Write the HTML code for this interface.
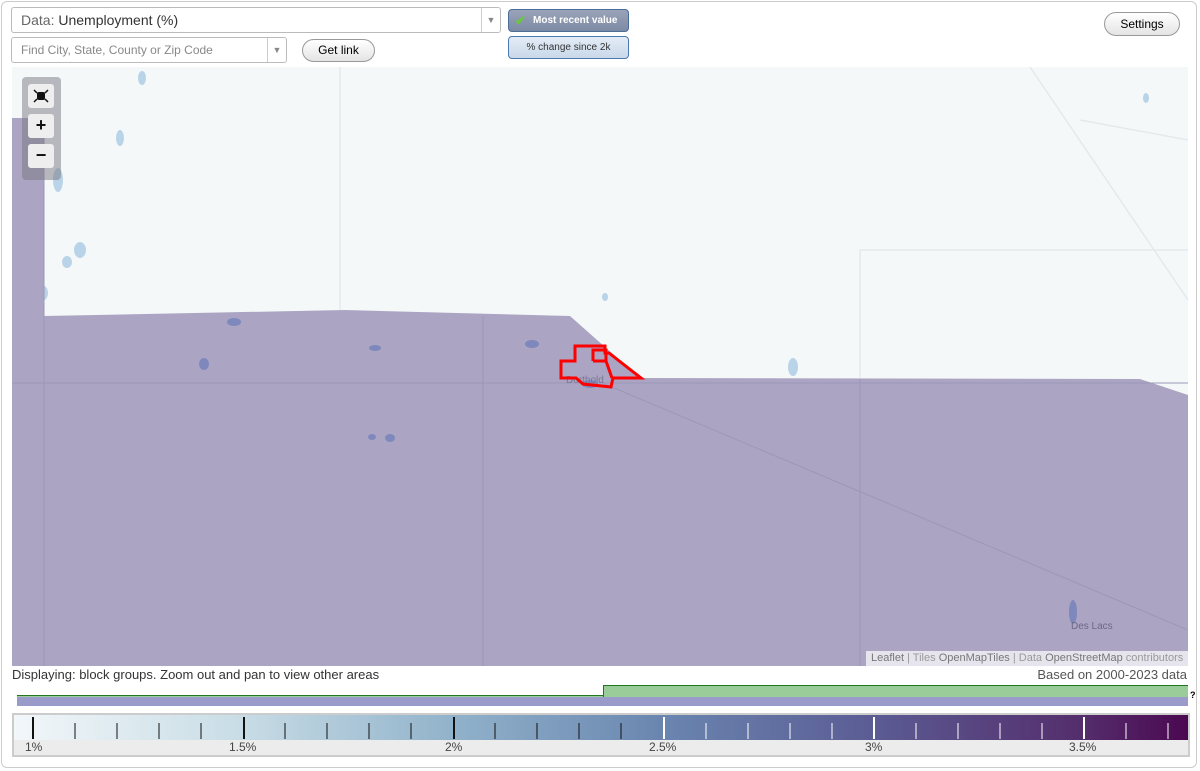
<!DOCTYPE html><html><head><style>
body{margin:0;width:1200px;height:771px;background:#fff;font-family:"Liberation Sans",sans-serif;position:relative;overflow:hidden}
.a{position:absolute}
.frame{left:1px;top:1px;width:1196px;height:767px;border:1px solid #ccc;border-radius:6px;box-sizing:border-box}
.sel{background:#fff;border:1px solid #bbb;border-radius:3px;box-sizing:border-box}
.arr{border-left:1px solid #ccc;width:18px;top:0;bottom:0;right:0;color:#888;font-size:9px;text-align:center}
.btn{border:1px solid #999;border-radius:12px;background:linear-gradient(#fff,#e4e4e4);font-size:12px;text-align:center;box-sizing:border-box}
.ctl{left:28px;width:26px;height:24px;background:#eee;border-radius:3px;text-align:center;font-weight:bold;font-size:18px;line-height:23px;color:#111}
</style></head><body>
<div class="a frame"></div>
<div class="a sel" style="left:11px;top:7px;width:490px;height:26px;font-size:14px;line-height:24px;padding-left:9px;color:#333"><span style="color:#666">Data:</span> Unemployment (%)<div class="a arr" style="line-height:24px">▼</div></div>
<div class="a sel" style="left:11px;top:37px;width:276px;height:26px;font-size:12px;line-height:24px;padding-left:9px;color:#888">Find City, State, County or Zip Code<div class="a arr" style="line-height:24px">▼</div></div>
<div class="a btn" style="left:302px;top:39px;width:73px;height:23px;line-height:21px">Get link</div>
<div class="a" style="left:508px;top:9px;width:121px;height:23px;border:1px solid #4a6d9a;border-radius:4px;background:linear-gradient(#9aa3b8,#7d8aa4);box-sizing:border-box;color:#fff;font-size:10px;font-weight:bold;line-height:21px;padding-left:24px">Most recent value<span class="a" style="left:6px;top:0;color:#6c3;font-size:13px">✔</span></div>
<div class="a" style="left:508px;top:36px;width:121px;height:23px;border:1px solid #4a7ab0;border-radius:4px;background:linear-gradient(#e4ecf6,#c9d8ea);box-sizing:border-box;color:#333;font-size:10px;line-height:21px;text-align:center">% change since 2k</div>
<div class="a btn" style="left:1104px;top:12px;width:76px;height:24px;line-height:22px">Settings</div>

<svg class="a" style="left:12px;top:67px" width="1176" height="599" viewBox="12 67 1176 599">
<rect x="12" y="67" width="1176" height="599" fill="#f4f8f9"/>
<g stroke="#e4eaec" fill="none" stroke-width="1.5"><path d="M340 67V310M1030 67L1188 300M860 250V378M1080 120L1188 140M860 250H1188"/></g>
<g fill="#b9d3e8"><ellipse cx="142" cy="78" rx="4" ry="7"/><ellipse cx="120" cy="138" rx="4" ry="8"/><ellipse cx="58" cy="180" rx="5" ry="12"/><ellipse cx="80" cy="250" rx="6" ry="8"/><ellipse cx="67" cy="262" rx="5" ry="6"/><ellipse cx="42" cy="293" rx="6" ry="8"/><ellipse cx="605" cy="297" rx="3" ry="4"/><ellipse cx="793" cy="367" rx="5" ry="9"/><ellipse cx="1146" cy="98" rx="3" ry="5"/></g>
<path d="M12 118H44V316L345 310L570 316L640 378L1140 379L1188 395V666H12Z" fill="#aba5c3"/>
<g stroke="#9d97b8" fill="none"><path d="M44 118V666M12 383H1188M483 316V666M860 379V666M600 382L1188 630"/></g>
<g fill="#7e88bc"><ellipse cx="234" cy="322" rx="7" ry="4"/><ellipse cx="375" cy="348" rx="6" ry="3"/><ellipse cx="204" cy="364" rx="5" ry="6"/><ellipse cx="532" cy="344" rx="7" ry="4"/><ellipse cx="390" cy="438" rx="5" ry="4"/><ellipse cx="372" cy="437" rx="4" ry="3"/><ellipse cx="1073" cy="612" rx="4" ry="12"/><ellipse cx="590" cy="384" rx="8" ry="4"/></g>
<text x="566" y="383" font-size="10" fill="#7a7596" font-family="Liberation Sans">Dorthold</text>
<text x="1071" y="629" font-size="10" fill="#6d6888" font-family="Liberation Sans">Des Lacs</text>
<path d="M561 361H575V346H605V353H609L641 378H613L611 387L583 384L576 378H561Z" fill="none" stroke="#f00" stroke-width="3"/>
<path d="M593 361V350H606V361H593" fill="none" stroke="#f00" stroke-width="3"/>
<path d="M606 361L612 378" fill="none" stroke="#f00" stroke-width="3"/>
</svg>
<div class="a" style="left:22px;top:77px;width:39px;height:103px;background:rgba(120,120,130,.5);border-radius:4px"></div>
<div class="a ctl" style="top:84px"><svg width="26" height="24"><rect x="9" y="8" width="8" height="8" rx="2" fill="#111"/><path d="M6 6l3 3M20 6l-3 3M6 18l3-3M20 18l-3-3" stroke="#111" stroke-width="1.5"/></svg></div>
<div class="a ctl" style="top:114px">+</div>
<div class="a ctl" style="top:144px">−</div>
<div class="a" style="left:866px;top:651px;width:322px;height:15px;background:rgba(240,240,245,.85);font-size:11px;line-height:15px;color:#999;padding-left:5px;box-sizing:border-box"><b style="color:#777;font-weight:normal">Leaflet</b> | Tiles <span style="color:#777">OpenMapTiles</span> | Data <span style="color:#777">OpenStreetMap</span> contributors</div>

<div class="a" style="left:12px;top:667px;font-size:13px;color:#333">Displaying: block groups. Zoom out and pan to view other areas</div>
<div class="a" style="right:13px;top:667px;font-size:13px;color:#555">Based on 2000-2023 data</div>
<div class="a" style="left:17px;top:695px;width:586px;height:2px;background:#9c9;border-top:1px solid #272"></div>
<div class="a" style="left:603px;top:685px;width:585px;height:12px;background:#9c9;border-top:1px solid #272;border-left:1px solid #272;box-sizing:border-box"></div>
<div class="a" style="left:17px;top:697px;width:1171px;height:9px;background:#9b9bcb"></div>
<div class="a" style="left:1190px;top:690px;font-size:9px;font-weight:bold">?</div>
<div class="a" style="left:12px;top:713px;width:1178px;height:44px;border:2px solid #ccc;box-sizing:border-box;background:#ececec">
<div class="a" style="left:0;top:0;right:0;height:25px;background:linear-gradient(90deg,#f2f7fa 0%,#c9dde6 19%,#92b3cb 37%,#6a86b0 55%,#5b5c94 73%,#542d6c 91%,#4b0851 100%)"></div>
</div>
<svg class="a" style="left:12px;top:715px" width="1178" height="26">
<g stroke="#111" stroke-width="1"><path d="M63 8V24M105 8V24M147 8V24M189 8V24M273 8V24M315 8V24M357 8V24M399 8V24M483 8V24M525 8V24M567 8V24M609 8V24"/></g>
<g stroke="#111" stroke-width="2"><path d="M21 2V24M232 2V24M442 2V24"/></g>
<g stroke="#fff" stroke-width="1"><path d="M694 8V24M736 8V24M778 8V24M820 8V24M904 8V24M946 8V24M988 8V24M1030 8V24M1114 8V24M1156 8V24"/></g>
<g stroke="#fff" stroke-width="2"><path d="M652 2V24M862 2V24M1072 2V24"/></g>
</svg>
<div class="a" style="top:740px;left:0;width:1200px;font-size:12px;color:#444">
<span class="a" style="left:25px">1%</span><span class="a" style="left:229px">1.5%</span><span class="a" style="left:445px">2%</span><span class="a" style="left:649px">2.5%</span><span class="a" style="left:865px">3%</span><span class="a" style="left:1069px">3.5%</span></div>
</body></html>
